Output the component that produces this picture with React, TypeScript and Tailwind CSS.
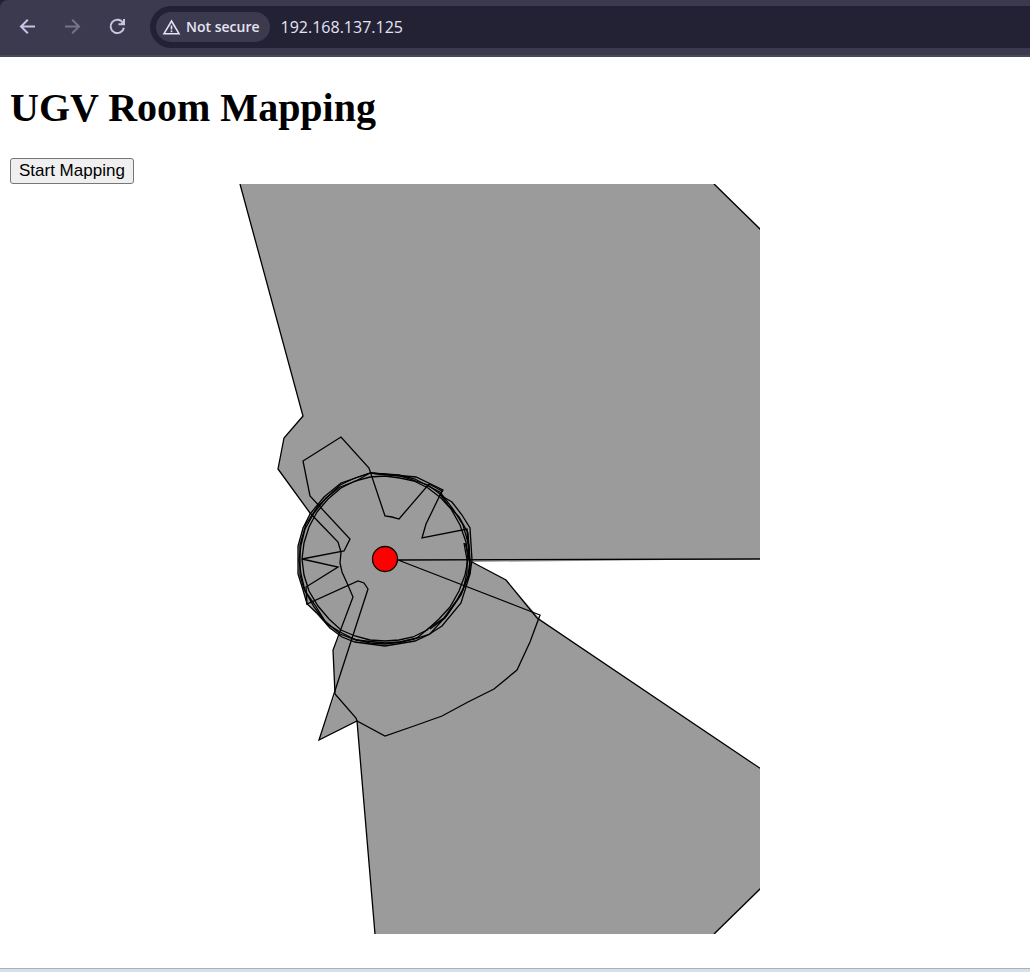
import React from "react";

const floor =
  "240,184 303,416 284,438 278,469 310,513 303,528 298,546 298,574 303,590 307,604 318,616 330,629 340,633 333,650 335,694 319,740 357,721 375,934 715,934 760,889 760,769 540,619 506,580 472,562 760,559 760,229 715,184";

const scans = [
  "240,184 303,416 284,438 278,469 310,513 338,542 341,552 340,563 342,572 347,583 353,597 333,650 335,694 356,718 357,721 375,934",
  "714,184 761,230",
  "714,934 761,888",
  "761,559 398,560 540,615 530,642 517,670 494,689 468,702 442,716 414,726 385,736 357,721 319,740 368,589 364,583 358,581 307,604 306,587 338,567 302,559 344,551 350,539 310,496 303,461 341,437 369,468 385,516 392,517 399,519 429,484 442,491 426,524 422,538 467,529 469,560",
  "761,769 537,618 506,580 472,562",
  "370,473 416,477 443,490 440,495 452,502 462,515 470,528 472,560 470,574 461,603 442,626 428,635 415,641 385,646 355,642 342,637 330,628 318,614 307,604 303,590 298,574 298,546 303,528 310,514 324,497 341,483 370,473",
  "370,477 385,476 400,478 414,481 428,488 441,498 451,509 460,525 466,542 468,560 465,575 459,591 450,607 439,619 427,630 413,637 399,640 385,641 370,640 355,636 341,630 329,619 318,606 309,591 304,575 302,559 304,543 309,527 317,512 328,499 341,488 355,481 370,477",
  "370,473 400,476 428,485 440,494 448,505 459,517 468,533 470,560 468,576 461,595 447,615 430,634 414,639 400,642 385,643 356,640 342,633 327,624 314,607 304,589 300,575 300,545 306,524 318,506 340,485 355,478 370,473",
  "370,473 356,481 340,487 326,498 314,513 305,529 301,545 299,560 301,574 305,591 315,605 325,621 340,634 353,639 370,643 385,644 401,642 417,638 429,628 444,618 457,600 464,587 470,573 469,546 463,525 453,509 440,492 430,487 415,479 399,475 370,473",
  "464,543 467,560 467,573 463,590 456,602 445,618 430,629",
  "465,543 470,560 470,573",
];

function AddressBar() {
  return (
    <header className="bg-[#222234]">
      <div className="flex h-[57px] items-center rounded-tl-lg border-b-2 border-[#4b4955] bg-[#3b3a4e] pb-px pl-4">
        <nav className="flex w-[134px] shrink-0 items-center gap-[21px]">
          <button type="button" aria-label="Back" className="size-6 text-[#c8c4e4]">
            <svg viewBox="0 0 24 24" fill="none" stroke="currentColor" strokeWidth="2">
              <path d="M19 11.5H5.5M11.8 4.8L5 11.5L11.8 18.2" />
            </svg>
          </button>
          <button type="button" aria-label="Forward" disabled className="size-6 text-[#777486]">
            <svg viewBox="0 0 24 24" fill="none" stroke="currentColor" strokeWidth="2">
              <path d="M4 11.5H17.5M11.2 4.8L18 11.5L11.2 18.2" />
            </svg>
          </button>
          <button type="button" aria-label="Reload" className="size-6 text-[#c8c4e4]">
            <svg viewBox="0 0 24 24" fill="none" stroke="currentColor" strokeWidth="2">
              <path d="M17 7.8A6.7 6.7 0 1 0 17.9 12.7" />
              <path d="M18 4V9.2H12.5" />
              <path d="M18.8 4.6V10H13.4Z" fill="currentColor" stroke="none" />
            </svg>
          </button>
        </nav>
        <div className="flex h-[42px] min-w-0 flex-1 items-center gap-[11px] rounded-l-full bg-[#222234] pl-[6px]">
          <button
            type="button"
            className="flex h-[30px] shrink-0 items-center gap-[5px] rounded-full bg-[#3b3a4e] pl-[6px] pr-[10px] text-sm font-semibold text-[#e6e3f2]"
          >
            <svg className="size-[19px]" viewBox="0 0 19 19" fill="none" stroke="currentColor" strokeWidth="1.6">
              <path d="M9.5 3L17 15.7H2Z" />
              <path d="M9.5 7.5V11.5M9.5 12.6V14.2" />
            </svg>
            Not secure
          </button>
          <input
            aria-label="Address"
            defaultValue="192.168.137.125"
            className="min-w-0 flex-1 bg-transparent text-base text-[#e6e3f2] outline-none"
          />
        </div>
      </div>
    </header>
  );
}

function RoomMap() {
  return (
    <svg viewBox="10 184 750 750" className="block aspect-square w-full max-w-[750px]" role="img" aria-label="Room map">
      <polygon points={floor} fill="#9b9b9b" />
      <g fill="none" stroke="#000" strokeWidth="1.3">
        {scans.map((points) => (
          <polyline key={points} points={points} />
        ))}
      </g>
      <circle cx="385" cy="559" r="12.5" fill="#f00" stroke="#000" strokeWidth="1.3" />
    </svg>
  );
}

export default function App() {
  return (
    <div className="flex min-h-screen flex-col bg-white font-['Open_Sans',sans-serif]">
      <AddressBar />
      <main className="flex-1 px-[10px] pt-7 text-black">
        <h1 className="mb-[27px] font-['Liberation_Serif',serif] text-[40px] leading-[46px] font-bold">
          UGV Room Mapping
        </h1>
        <button
          type="button"
          className="block h-[26px] rounded-[3px] border border-[#767676] bg-[#efefef] px-2 font-['Liberation_Sans',sans-serif] text-[17px] leading-6"
        >
          Start Mapping
        </button>
        <RoomMap />
      </main>
      <footer className="h-1 border-t border-[#a9b0b8] bg-[#d7dfe9]" />
    </div>
  );
}
